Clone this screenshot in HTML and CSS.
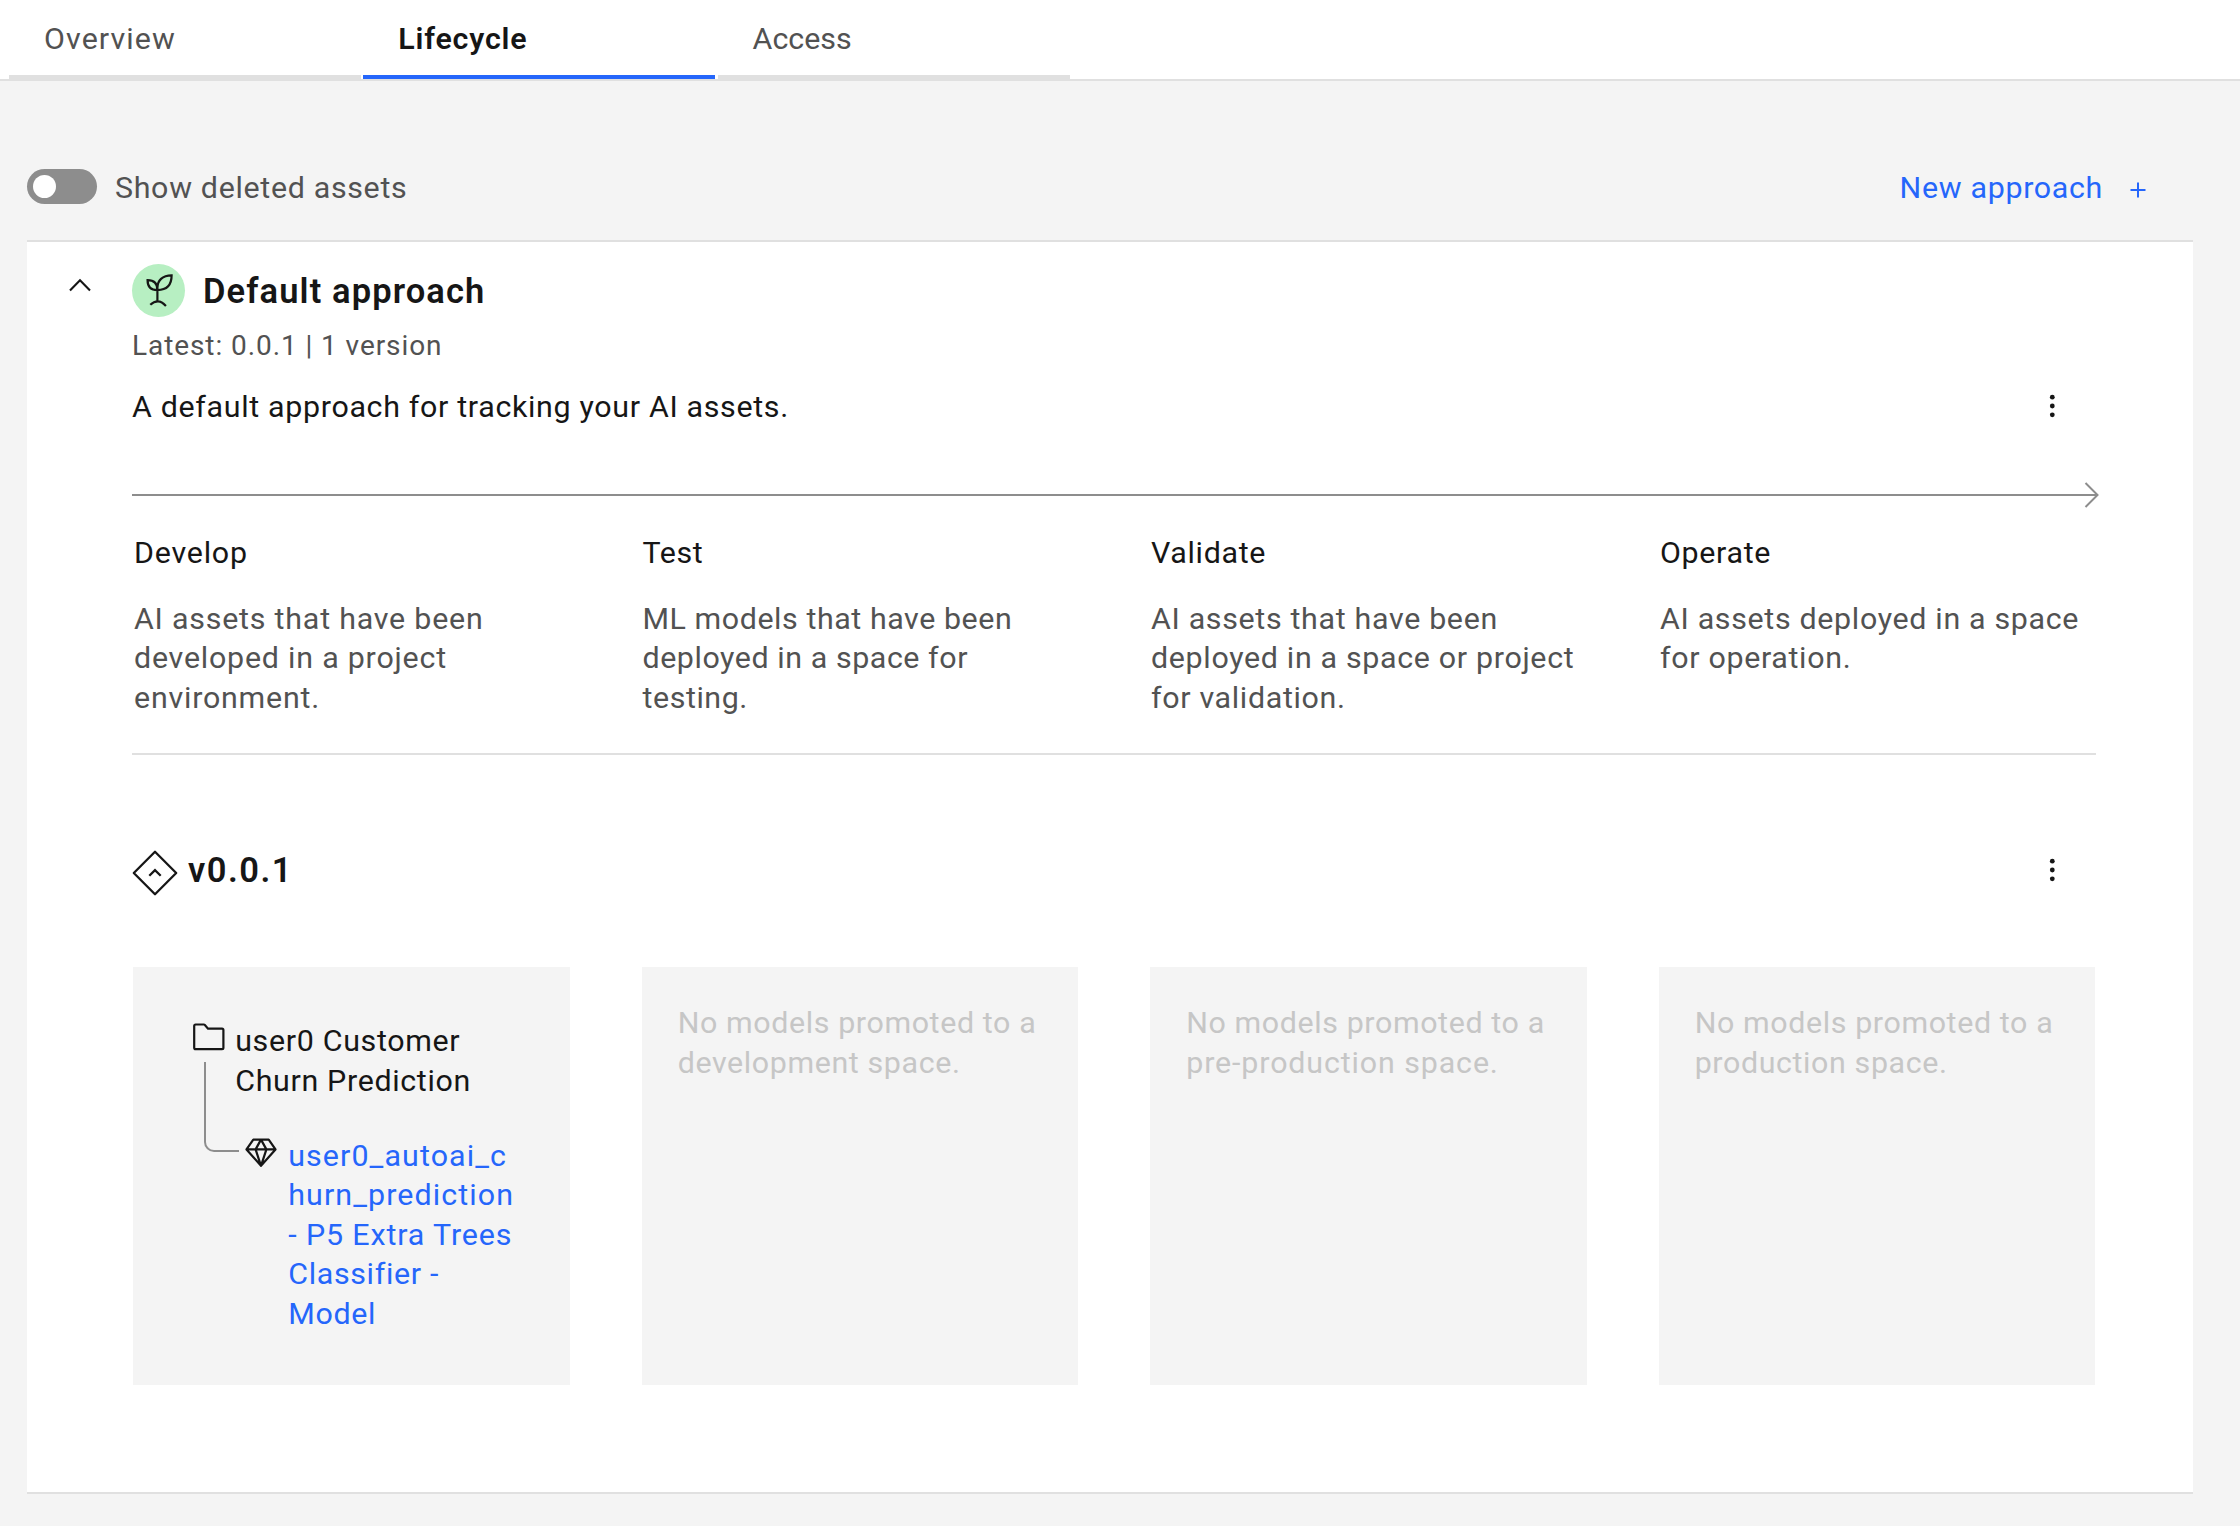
FILE: index.html
```html
<!DOCTYPE html>
<html lang="en">
<head>
<meta charset="utf-8">
<title>Lifecycle</title>
<link rel="stylesheet" href="styles.css">
</head>
<body>
<nav class="tabs">
  <a class="tab tab-wide">Overview</a>
  <a class="tab tab-active">Lifecycle</a>
  <a class="tab tab-tight">Access</a>
</nav>
<main class="page">
  <div class="toolbar">
    <div class="switch"><span class="knob"></span></div>
    <span class="switch-label">Show deleted assets</span>
    <a class="new-approach"><span>New approach</span>
      <svg width="16" height="16" viewBox="0 0 16 16"><path d="M8 0.5V15.5M0.5 8H15.5" stroke="currentColor" stroke-width="2"/></svg>
    </a>
  </div>
  <section class="panel">
    <svg class="collapse" width="22" height="14" viewBox="0 0 22 14"><path d="M1 12.5L11 2.2L21 12.5" fill="none" stroke="#161616" stroke-width="2.1"/></svg>
    <div class="content">
      <header class="heading">
        <span class="badge">
          <svg width="35" height="35" viewBox="0 0 32 32" fill="none" stroke="#161616" stroke-width="2"><path d="M15 27V14M15 14.500C15 8 19.500 3 28 3C28 12 23.500 16.500 15 16.500C9 16.500 6 13.500 6 7.500C11.500 7.500 15 10.500 15 16.500M8.500 30C11 27.500 13 26.800 15.500 26.800C18.500 26.800 20.500 28.500 22.800 31"/></svg>
        </span>
        <h1>Default approach</h1>
      </header>
      <p class="meta">Latest: 0.0.1 | 1 version</p>
      <div class="summary">
        <p>A default approach for tracking your AI assets.</p>
        <svg class="menu" width="6" height="24" viewBox="0 0 6 24" fill="#161616"><circle cx="3.300" cy="3.200" r="2.400"/><circle cx="3.300" cy="12" r="2.400"/><circle cx="3.300" cy="20.800" r="2.400"/></svg>
      </div>
      <svg class="arrow" width="1967" height="28" viewBox="0 0 1967 28" fill="none" stroke="#8d8d8d" stroke-width="2"><path d="M0 14H1965M1953.500 2L1965.500 14L1953.500 26"/></svg>
      <div class="stages">
        <div class="stage stage-develop"><h2>Develop</h2><p>AI assets that have been<br>developed in a project<br>environment.</p></div>
        <div class="stage stage-test"><h2>Test</h2><p>ML models that have been<br>deployed in a space for<br>testing.</p></div>
        <div class="stage"><h2>Validate</h2><p>AI assets that have been<br>deployed in a space or project<br>for validation.</p></div>
        <div class="stage"><h2>Operate</h2><p>AI assets deployed in a space<br>for operation.</p></div>
      </div>
      <div class="version">
        <svg width="46" height="46" viewBox="0 0 46 46" fill="none" stroke="#161616"><path d="M23 1.800L44.200 23L23 44.200L1.800 23Z" stroke-width="2.300" stroke-linejoin="round"/><path d="M17.300 25.800L23 20.200L28.700 25.800" stroke-width="2.300"/></svg>
        <h2>v0.0.1</h2>
        <svg class="menu" width="6" height="24" viewBox="0 0 6 24" fill="#161616"><circle cx="3.300" cy="3.200" r="2.400"/><circle cx="3.300" cy="12" r="2.400"/><circle cx="3.300" cy="20.800" r="2.400"/></svg>
      </div>
      <div class="cards">
        <div class="card tree">
          <div class="project">
            <svg width="32" height="28" viewBox="0 0 32 28" fill="none" stroke="#161616" stroke-width="2.200"><path d="M2.600 1.500H10.800Q11.400 1.500 11.900 2L15 5.600H29Q30.400 5.600 30.400 7V24.800Q30.400 26.200 29 26.200H2.600Q1.200 26.200 1.200 24.800V2.900Q1.200 1.500 2.600 1.500Z"/></svg>
            <p>user0 Customer<br>Churn Prediction</p>
          </div>
          <div class="asset">
            <span class="branch"></span>
            <svg width="32" height="30" viewBox="0 0 32 30" fill="none" stroke="#161616" stroke-width="2.200" stroke-linejoin="round"><path d="M8.300 1.600H23.700L30.500 11.400L16 27.800L1.500 11.400ZM1.500 11.400H30.500M16 1.600L10.600 11.400L16 27.800L21.400 11.400Z"/></svg>
            <a><span class="name">user0_autoai_c<br>hurn_prediction</span><br><span class="loose">- P5 Extra Trees</span><br>Classifier -<br>Model</a>
          </div>
        </div>
        <div class="card empty">No models promoted to a<br>development space.</div>
        <div class="card empty">No models promoted to a<br><span class="loose">pre-production space.</span></div>
        <div class="card empty">No models promoted to a<br>production space.</div>
      </div>
    </div>
  </section>
</main>
</body>
</html>
```
FILE: styles.css
```css
* { box-sizing: border-box; }
body {
  margin: 0;
  min-height: 1526px;
  background: #f4f4f4;
  color: #161616;
  font: 400 30.4px/39.5px Roboto, "Liberation Sans", sans-serif;
  letter-spacing: 0.67px;
  white-space: nowrap;
}
h1, h2, p { margin: 0; font: inherit; }
svg { display: block; flex: none; }

.tabs {
  display: flex;
  gap: 2.3px;
  height: 81px;
  padding-left: 9px;
  background: #fff;
  border-bottom: 2px solid #e0e0e0;
}
.tab {
  width: 352px;
  height: 79px;
  padding: 19px 0 0 35px;
  border-bottom: 4px solid #e0e0e0;
  color: #525252;
}
.tab-wide { letter-spacing: 1.1px; }
.tab-tight { letter-spacing: 0; }
.tab-active {
  border-color: #2566fb;
  color: #161616;
  font-weight: 600;
  letter-spacing: 0.8px;
}

.page { padding: 0 47px 0 27px; }
.toolbar {
  display: flex;
  align-items: center;
  height: 159px;
  padding: 53px 47px 0 0;
}
.switch {
  width: 70px;
  height: 35px;
  margin-top: -1px;
  padding: 6px;
  border-radius: 18px;
  background: #8d8d8d;
}
.knob {
  display: block;
  width: 23px;
  height: 23px;
  border-radius: 50%;
  background: #fff;
}
.switch-label { margin: 1px 0 0 18px; color: #525252; }
.new-approach {
  display: flex;
  align-items: center;
  gap: 27px;
  margin: 1px 0 0 auto;
  color: #2566fb;
}
.new-approach svg { margin-top: 5px; }

.panel {
  display: flex;
  height: 1254px;
  background: #fff;
  border: solid #e0e0e0;
  border-width: 2px 0;
}
.collapse { margin: 36px 41px 0 42px; }
.content { width: 1964px; padding-top: 22px; }
.heading { display: flex; align-items: center; height: 53px; }
.badge {
  display: grid;
  place-items: center;
  width: 53px;
  height: 53px;
  padding-bottom: 3px;
  border-radius: 50%;
  background: #b7efc2;
}
.heading h1, .version h2 { font-size: 34.5px; font-weight: 600; }
.heading h1 { margin: 2px 0 0 18px; letter-spacing: 1.1px; }
.meta {
  margin-top: 9px;
  font-size: 28px;
  letter-spacing: 0.92px;
  color: #525252;
}
.summary {
  display: flex;
  align-items: center;
  justify-content: space-between;
  margin-top: 21px;
  padding-right: 41px;
}
.arrow { margin-top: 55px; }
.stages, .cards {
  display: grid;
  grid-template-columns: repeat(4, 1fr);
  column-gap: 72px;
}
.stages {
  height: 246px;
  padding-top: 24px;
  border-bottom: 2px solid #e0e0e0;
}
.stage { padding-left: 1px; }
.stage p { margin-top: 26px; color: #525252; }
.stage-develop { padding-left: 2px; letter-spacing: 0.78px; }
.stage-test { padding-left: 1.5px; letter-spacing: 0.56px; }
.version {
  display: flex;
  align-items: center;
  height: 46px;
  margin-top: 95px;
  padding-right: 41px;
}
.version h2 { margin: -4px 0 0 10px; letter-spacing: 1.5px; }
.version .menu { margin: -6px 0 0 auto; }
.cards { margin: 71px 0.8px 0 1.2px; }
.card { height: 418px; background: #f4f4f4; }
.tree { padding: 54px 0 0 60px; }
.project { display: flex; }
.project svg { margin: 2px 10px 0 0; }
.asset {
  display: flex;
  align-items: flex-start;
  margin: -38px 0 0 11px;
}
.branch {
  width: 35px;
  height: 90px;
  margin: 0 6px 0 0;
  border: solid #8d8d8d;
  border-width: 0 0 2px 2px;
  border-bottom-left-radius: 10px;
}
.asset svg { margin-top: 76px; }
.asset a { margin: 74px 0 0 11px; line-height: 39.4px; color: #2566fb; }
.name { letter-spacing: 1.1px; }
.empty { padding: 36px 0 0 36px; letter-spacing: 0.61px; color: #c6c6c6; }
.loose { letter-spacing: 0.88px; }
```
